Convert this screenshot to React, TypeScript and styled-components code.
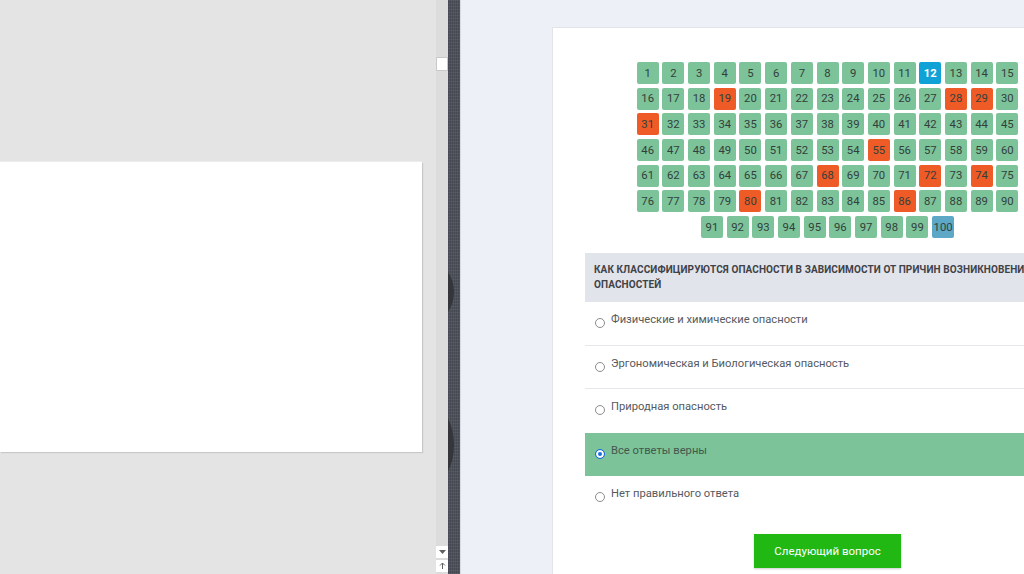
import styled, { createGlobalStyle } from 'styled-components';

type CellState = 'ok' | 'wrong' | 'current' | 'pending';

const WRONG = [19, 28, 29, 31, 55, 68, 72, 74, 80, 86];

const ANSWERS = [
  'Физические и химические опасности',
  'Эргономическая и Биологическая опасность',
  'Природная опасность',
  'Все ответы верны',
  'Нет правильного ответа',
];

const SELECTED = 3;

const GlobalStyle = createGlobalStyle`
  html, body {
    margin: 0;
    padding: 0;
    width: 1024px;
    height: 574px;
    overflow: hidden;
    font-family: Roboto, 'Liberation Sans', sans-serif;
  }
  * {
    box-sizing: border-box;
  }
`;

const Screen = styled.div`
  display: flex;
  width: 1024px;
  height: 574px;
  overflow: hidden;
`;

const LeftPane = styled.div`
  width: 436px;
  flex-shrink: 0;
  background: #e4e4e4;
  padding-top: 162px;
`;

const Slide = styled.div`
  width: 422px;
  height: 290px;
  background: #ffffff;
  box-shadow: 1px 1px 1px rgba(0, 0, 0, 0.12), 0 -1px 0 #ececec;
`;

const Scrollbar = styled.div`
  width: 12px;
  flex-shrink: 0;
  background: #dcdcdc;
  display: flex;
  flex-direction: column;
  align-items: center;
  padding-top: 57px;
`;

const Thumb = styled.div`
  width: 12px;
  height: 14px;
  background: #ffffff;
  border: 1px solid #c9c9c9;
`;

const Spacer = styled.div`
  flex: 1;
`;

const ArrowButton = styled.div`
  width: 12px;
  height: 12px;
  background: #ffffff;
  display: flex;
  align-items: center;
  justify-content: center;
  margin-bottom: 2px;
`;

const DarkStrip = styled.div`
  position: relative;
  width: 12px;
  flex-shrink: 0;
  overflow: hidden;
  background-color: #4f535d;
  background-image: repeating-linear-gradient(
      0deg,
      rgba(255, 255, 255, 0.05) 0 1px,
      transparent 1px 3px
    ),
    repeating-linear-gradient(90deg, rgba(0, 0, 0, 0.12) 0 1px, transparent 1px 2px);
`;

const Blob = styled.div<{ $top: number; $height: number }>`
  position: absolute;
  left: -42px;
  top: ${(p) => p.$top}px;
  width: 48px;
  height: ${(p) => p.$height}px;
  border-radius: 50%;
  background: #34363c;
`;

const RightPane = styled.div`
  flex: 1;
  background: #eef0f8;
  padding: 27px 0 0 91px;
  border-left: 1px solid #d9dbe3;
`;

const Card = styled.div`
  width: 552px;
  height: 600px;
  background: #ffffff;
  border: 1px solid #e2e4ea;
  padding: 34px 33px 0 32px;
`;

const Grid = styled.div`
  width: 383px;
  margin: 0 auto;
  display: flex;
  flex-wrap: wrap;
  justify-content: center;
  gap: 3.7px 3.7px;
`;

const cellBg: Record<CellState, string> = {
  ok: '#7cc39a',
  wrong: '#ee5b27',
  current: '#10a2d6',
  pending: '#5ea8c7',
};

const Cell = styled.div<{ $state: CellState }>`
  width: 22px;
  height: 22px;
  border-radius: 2px;
  background: ${(p) => cellBg[p.$state]};
  color: ${(p) => (p.$state === 'current' ? '#ffffff' : '#33403a')};
  font-size: 11.3px;
  font-weight: ${(p) => (p.$state === 'current' ? 700 : 400)};
  display: flex;
  align-items: center;
  justify-content: center;
`;

const Question = styled.div`
  margin-top: 15px;
  background: #e2e4ec;
  padding: 10px 8px 10px 9px;
  font-size: 10px;
  font-weight: 700;
  line-height: 14.5px;
  color: #3f4247;
  text-transform: uppercase;
  letter-spacing: 0.1px;
`;

const AnswerList = styled.div`
  display: flex;
  flex-direction: column;
`;

const Answer = styled.div<{ $selected: boolean; $divider: boolean }>`
  height: 43.5px;
  display: flex;
  align-items: flex-start;
  gap: 6px;
  padding: 11px 10px 0;
  background: ${(p) => (p.$selected ? '#7cc39a' : 'transparent')};
  border-bottom: 1px solid ${(p) => (p.$divider ? '#e6e7eb' : 'transparent')};
  font-size: 11.2px;
  line-height: 14px;
  color: ${(p) => (p.$selected ? '#43584c' : '#555a5e')};
`;

const Radio = styled.span<{ $checked: boolean }>`
  flex-shrink: 0;
  margin-top: 5px;
  width: 10px;
  height: 10px;
  border-radius: 50%;
  background: ${(p) => (p.$checked ? '#1a6fe0' : '#ffffff')};
  border: 1px solid ${(p) => (p.$checked ? '#1a6fe0' : '#8c8c8c')};
  box-shadow: ${(p) => (p.$checked ? 'inset 0 0 0 2px #ffffff' : 'none')};
`;

const NextButton = styled.button`
  display: block;
  margin: 14px auto 0;
  width: 147px;
  height: 34px;
  border: none;
  background: #22b814;
  color: #ffffff;
  font-family: Roboto, 'Liberation Sans', sans-serif;
  font-size: 11.5px;
  font-weight: 400;
  box-shadow: 0 1px 2px rgba(0, 0, 0, 0.2);
  cursor: pointer;
`;

function stateOf(n: number): CellState {
  if (n === 12) return 'current';
  if (n === 100) return 'pending';
  if (WRONG.includes(n)) return 'wrong';
  return 'ok';
}

function App() {
  const numbers = Array.from({ length: 100 }, (_, i) => i + 1);

  return (
    <>
      <GlobalStyle />
      <Screen>
        <LeftPane>
          <Slide />
        </LeftPane>

        <Scrollbar>
          <Thumb />
          <Spacer />
          <ArrowButton>
            <svg width="7" height="4" viewBox="0 0 7 4">
              <path d="M0 0h7L3.5 4z" fill="#606060" />
            </svg>
          </ArrowButton>
          <ArrowButton>
            <svg width="7" height="6" viewBox="0 0 7 6">
              <path d="M3.5 0v6M1 2.5l2.5-2.5 2.5 2.5" stroke="#606060" fill="none" />
            </svg>
          </ArrowButton>
        </Scrollbar>

        <DarkStrip>
          <Blob $top={262} $height={60} />
          <Blob $top={405} $height={80} />
        </DarkStrip>

        <RightPane>
          <Card>
            <Grid>
              {numbers.map((n) => (
                <Cell key={n} $state={stateOf(n)}>
                  {n}
                </Cell>
              ))}
            </Grid>

            <Question>
              Как классифицируются опасности в зависимости от причин возникновения
              опасностей
            </Question>

            <AnswerList>
              {ANSWERS.map((text, i) => (
                <Answer key={text} $selected={i === SELECTED} $divider={i < 2}>
                  <Radio $checked={i === SELECTED} />
                  <span>{text}</span>
                </Answer>
              ))}
            </AnswerList>

            <NextButton type="button">Следующий вопрос</NextButton>
          </Card>
        </RightPane>
      </Screen>
    </>
  );
}

export default App;
